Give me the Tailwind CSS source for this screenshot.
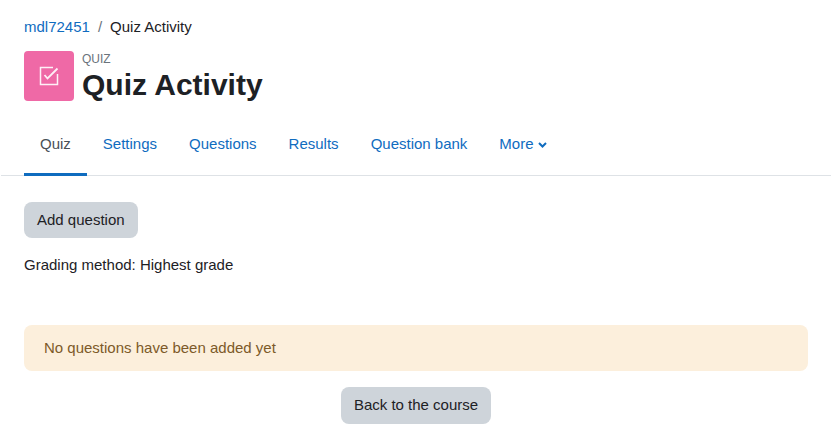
<!DOCTYPE html>
<html lang="en">
<head>
  <meta charset="UTF-8">
  <title>Quiz Activity</title>
  <script src="https://cdn.jsdelivr.net/npm/@tailwindcss/browser@4"></script>
</head>
<body class="bg-white font-['Liberation_Sans',sans-serif] text-[15px] text-[#1d2125] h-[445px] overflow-hidden">
  <div class="w-[832px] pt-[16px]">

    <!-- Breadcrumb -->
    <div class="px-[24px] flex items-center h-[22px] leading-[22px]">
      <a class="text-[#0f6cbf]">mdl72451</a>
      <span class="mx-[8px] text-[#6a737b]">/</span>
      <span>Quiz Activity</span>
    </div>

    <!-- Header -->
    <div class="px-[24px] mt-[13px] flex items-start">
      <div class="w-[50px] h-[50px] rounded-[4px] bg-[#ef69a6] flex items-center justify-center">
        <svg width="24" height="24" viewBox="0 0 24 24" fill="none" stroke="white" stroke-opacity="0.9" stroke-width="1.5">
          <path d="M20.500 10V20.500H3.500V3.500H16"/>
          <path d="M7.500 11l3 3.500L20.500 4.500" stroke-width="1.800"/>
        </svg>
      </div>
      <div class="ml-[8px] pt-[1px]">
        <div class="text-[12px] leading-[14px] text-[#6a737b] uppercase">Quiz</div>
        <h1 class="text-[30px] leading-[36px] mt-[1px] font-bold">Quiz Activity</h1>
      </div>
    </div>

    <!-- Tabs -->
    <nav class="mt-[13px] mx-[1px] px-[23px] flex border-b border-[#dee2e6] h-[60px]">
      <a class="px-[16px] flex items-center border-b-[3px] border-[#0f6cbf] h-[60px] text-[#495057] pb-[1px]">Quiz</a>
      <a class="px-[16px] flex items-center text-[#0f6cbf] pb-[3px]">Settings</a>
      <a class="px-[16px] flex items-center text-[#0f6cbf] pb-[3px]">Questions</a>
      <a class="px-[16px] flex items-center text-[#0f6cbf] pb-[3px]">Results</a>
      <a class="px-[16px] flex items-center text-[#0f6cbf] pb-[3px]">Question bank</a>
      <a class="px-[16px] flex items-center text-[#0f6cbf] pb-[3px]">More
        <svg class="ml-[4px] mt-[2px]" width="9" height="6" viewBox="0 0 9 6" fill="none" stroke="#0f6cbf" stroke-width="2"><path d="M1 1l3.500 3.500L8 1"/></svg>
      </a>
    </nav>

    <!-- Content -->
    <div class="px-[24px] mt-[26px]">
      <button class="block bg-[#ced4da] rounded-[8px] px-[13px] h-[36px]">Add question</button>
      <p class="mt-[16px] leading-[22px]">Grading method: Highest grade</p>
      <div class="mt-[49px] bg-[#fcefdc] text-[#7d5a29] rounded-[8px] h-[46px] px-[20px] flex items-center">No questions have been added yet</div>
      <div class="mt-[16px] flex justify-center">
        <button class="bg-[#ced4da] rounded-[8px] px-[13px] h-[37px]">Back to the course</button>
      </div>
    </div>
  </div>
</body>
</html>
